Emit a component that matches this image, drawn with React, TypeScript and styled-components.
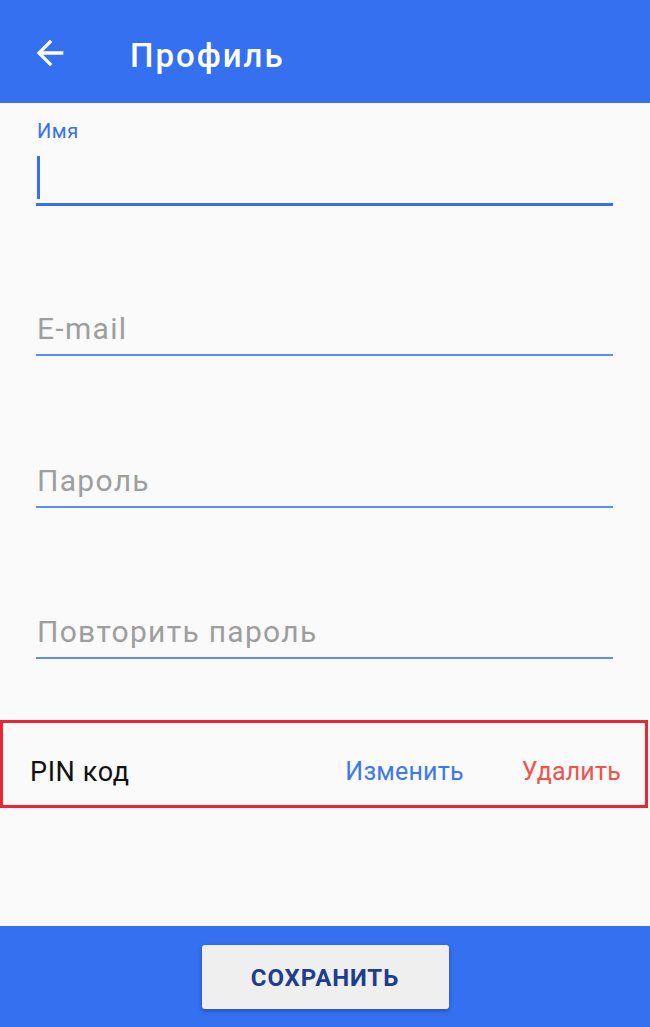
import React from "react";
import styled, { createGlobalStyle } from "styled-components";

const Global = createGlobalStyle`
  html, body { margin: 0; padding: 0; }
  body { font-family: Roboto, "Noto Sans", "Liberation Sans", sans-serif; background: #fafafa; }
  * { box-sizing: border-box; }
`;

const BLUE = "#3570f0";

const Screen = styled.div`
  width: 650px;
  height: 1027px;
  display: flex;
  flex-direction: column;
  background: #fafafa;
  overflow: hidden;
`;

const Toolbar = styled.header`
  height: 103px;
  flex: none;
  background: ${BLUE};
  display: flex;
  align-items: flex-start;
  padding: 33px 0 0 30px;
  color: #fff;
`;

const BackButton = styled.button`
  width: 40px;
  height: 40px;
  padding: 0;
  border: none;
  background: none;
  color: #fff;
  display: flex;
  align-items: center;
  justify-content: center;
  cursor: pointer;
`;

const Title = styled.h1`
  margin: 3px 0 0 60px;
  font-family: Roboto, "Noto Sans", sans-serif;
  font-weight: 500;
  font-size: 33px;
  line-height: 40px;
  letter-spacing: 2px;
  color: #fff;
`;

const Main = styled.main`
  flex: 1;
  display: flex;
  flex-direction: column;
`;

const Form = styled.div`
  display: flex;
  flex-direction: column;
  padding: 16px 37px 0 36px;
`;

const Field = styled.div<{ $gap: number }>`
  display: flex;
  flex-direction: column;
  margin-top: ${(p) => p.$gap}px;
`;

const Label = styled.label`
  font-size: 20px;
  line-height: 24px;
  letter-spacing: 0.6px;
  color: ${BLUE};
  padding-left: 1px;
`;

const InputLine = styled.div<{ $focused?: boolean }>`
  display: flex;
  align-items: flex-end;
  border-bottom: ${(p) => (p.$focused ? `3px solid ${BLUE}` : "2px solid #5b8df2")};
  padding: ${(p) => (p.$focused ? "13px 0 4px 1px" : "0 0 7px 1px")};
`;

const Caret = styled.span`
  display: block;
  width: 3px;
  height: 43px;
  background: ${BLUE};
`;

const Placeholder = styled.span`
  font-size: 30px;
  line-height: 36px;
  letter-spacing: 1.3px;
  color: #9e9e9e;
`;

const PinRow = styled.div`
  margin: 61px 2px 0 0;
  height: 88px;
  border: 3px solid #ec2530;
  display: flex;
  align-items: center;
  padding: 15px 24px 0 27px;
`;

const PinLabel = styled.span`
  flex: 1;
  font-size: 27px;
  letter-spacing: 0.6px;
  color: #111;
`;

const TextAction = styled.button<{ $danger?: boolean }>`
  border: none;
  background: none;
  padding: 0;
  font-family: Roboto, "Noto Sans", sans-serif;
  font-size: 25px;
  letter-spacing: 0.2px;
  color: ${(p) => (p.$danger ? "#f0524c" : "#3d78f0")};
  margin-left: ${(p) => (p.$danger ? "58px" : "0")};
  cursor: pointer;
`;

const Footer = styled.footer`
  height: 101px;
  flex: none;
  background: ${BLUE};
  display: flex;
  align-items: center;
  justify-content: center;
`;

const SaveButton = styled.button`
  width: 247px;
  height: 64px;
  border: none;
  border-radius: 3px;
  background: #efefef;
  box-shadow: 0 2px 4px rgba(0, 0, 0, 0.28);
  font-family: Roboto, "Noto Sans", sans-serif;
  font-weight: 700;
  font-size: 24px;
  color: #1e3d8c;
  letter-spacing: 0.9px;
  cursor: pointer;
  padding-top: 3px;
`;

const BackIcon = () => (
  <svg width="40" height="40" viewBox="0 0 24 24" fill="currentColor">
    <path d="M20 11H7.83l5.59-5.59L12 4l-8 8 8 8 1.41-1.41L7.83 13H20v-2z" />
  </svg>
);

export default function App() {
  return (
    <>
      <Global />
      <Screen>
        <Toolbar>
          <BackButton aria-label="Назад">
            <BackIcon />
          </BackButton>
          <Title>Профиль</Title>
        </Toolbar>
        <Main>
          <Form>
            <Field $gap={0}>
              <Label>Имя</Label>
              <InputLine $focused>
                <Caret />
              </InputLine>
            </Field>
            <Field $gap={105}>
              <InputLine>
                <Placeholder>E-mail</Placeholder>
              </InputLine>
            </Field>
            <Field $gap={107}>
              <InputLine>
                <Placeholder>Пароль</Placeholder>
              </InputLine>
            </Field>
            <Field $gap={106}>
              <InputLine>
                <Placeholder>Повторить пароль</Placeholder>
              </InputLine>
            </Field>
          </Form>
          <PinRow>
            <PinLabel>PIN код</PinLabel>
            <TextAction>Изменить</TextAction>
            <TextAction $danger>Удалить</TextAction>
          </PinRow>
        </Main>
        <Footer>
          <SaveButton>СОХРАНИТЬ</SaveButton>
        </Footer>
      </Screen>
    </>
  );
}
